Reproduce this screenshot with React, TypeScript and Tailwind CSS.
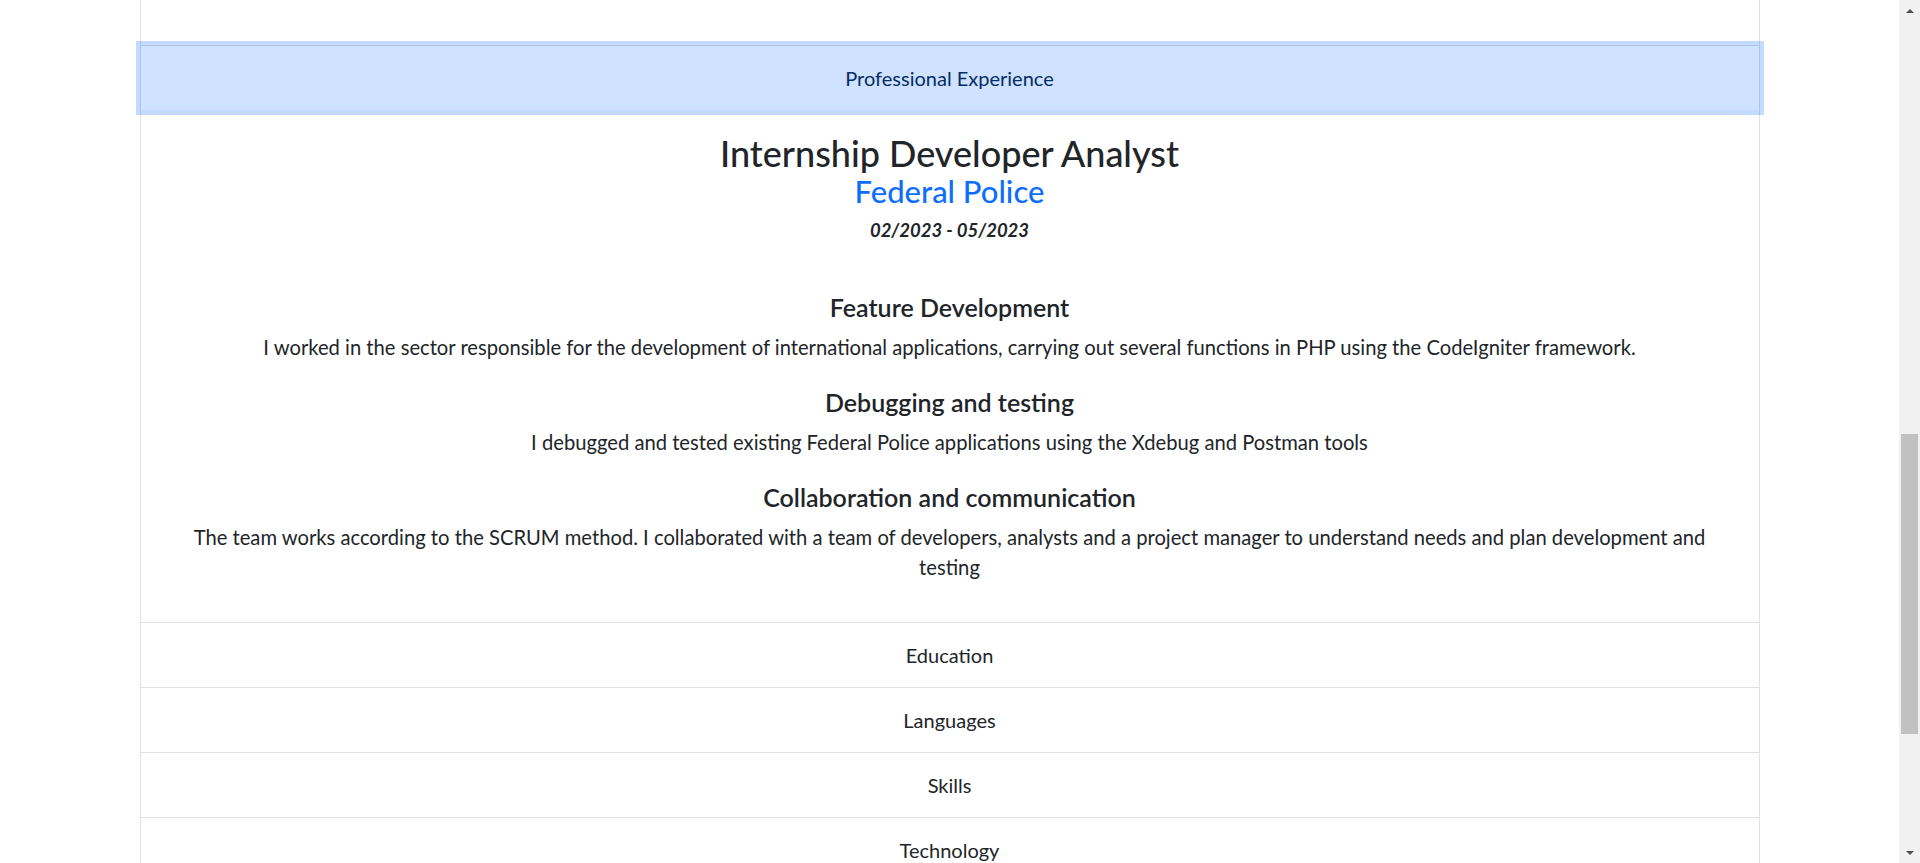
const tasks = [
  {
    title: 'Feature Development',
    text: 'I worked in the sector responsible for the development of international applications, carrying out several functions in PHP using the CodeIgniter framework.',
  },
  {
    title: 'Debugging and testing',
    text: 'I debugged and tested existing Federal Police applications using the Xdebug and Postman tools',
  },
  {
    title: 'Collaboration and communication',
    text: 'The team works according to the SCRUM method. I collaborated with a team of developers, analysts and a project manager to understand needs and plan development and testing',
  },
];

const sections = ['Education', 'Languages', 'Skills', 'Technology'];

function Scrollbar() {
  return (
    <div className="flex h-full w-[21px] shrink-0 flex-col items-center bg-[#f1f1f1]">
      <div className="flex h-[21px] w-full items-center justify-center">
        <div className="h-0 w-0 border-x-[4px] border-b-[4px] border-x-transparent border-b-[#505050]" />
      </div>
      <div className="mt-[413px] h-[300px] w-[17px] bg-[#c1c1c1]" />
      <div className="flex-1" />
      <div className="flex h-[21px] w-full items-center justify-center">
        <div className="h-0 w-0 border-x-[4px] border-t-[4px] border-x-transparent border-t-[#505050]" />
      </div>
    </div>
  );
}

export default function App() {
  return (
    <div
      className="flex h-[863px] w-[1920px] overflow-hidden bg-white text-[#212529]"
      style={{ fontFamily: 'Lato, "Noto Sans", sans-serif' }}
    >
      <div className="h-full flex-1 overflow-hidden">
        <div className="mx-auto w-[1620px] border-x border-[#dee2e6]">
          {/* tail of the previous open item */}
          <div className="h-[45px]" />

          <div className="border-t border-[#dee2e6]">
            <button className="relative z-10 flex h-[64px] w-full items-center justify-center bg-[#cfe2ff] text-[20px] text-[#052c65] shadow-[0_0_0_5px_rgba(13,110,253,0.25)]">
              Professional Experience
            </button>

            <div className="flex flex-col items-center px-[40px] pt-[22px] pb-[40px] text-center">
              <h2 className="text-[36px] leading-[42px] font-medium">Internship Developer Analyst</h2>
              <h4 className="text-[31px] leading-[34px] font-medium text-[#0d6efd]">Federal Police</h4>
              <p className="mt-[7px] text-[18.5px] leading-[30px] font-bold italic">02/2023 - 05/2023</p>

              <div className="mt-[44px] flex flex-col items-center gap-[22px]">
                {tasks.map((t) => (
                  <div key={t.title} className="flex flex-col items-center gap-[7px]">
                    <h4 className="text-[25px] leading-[36px] font-semibold">{t.title}</h4>
                    <p className="max-w-[1535px] text-[20.2px] leading-[30px]">{t.text}</p>
                  </div>
                ))}
              </div>
            </div>
          </div>

          {sections.map((s) => (
            <div key={s} className="border-t border-[#dee2e6]">
              <button className="flex h-[64px] w-full items-center justify-center text-[20px] text-[#212529]">
                {s}
              </button>
            </div>
          ))}
        </div>
      </div>
      <Scrollbar />
    </div>
  );
}
